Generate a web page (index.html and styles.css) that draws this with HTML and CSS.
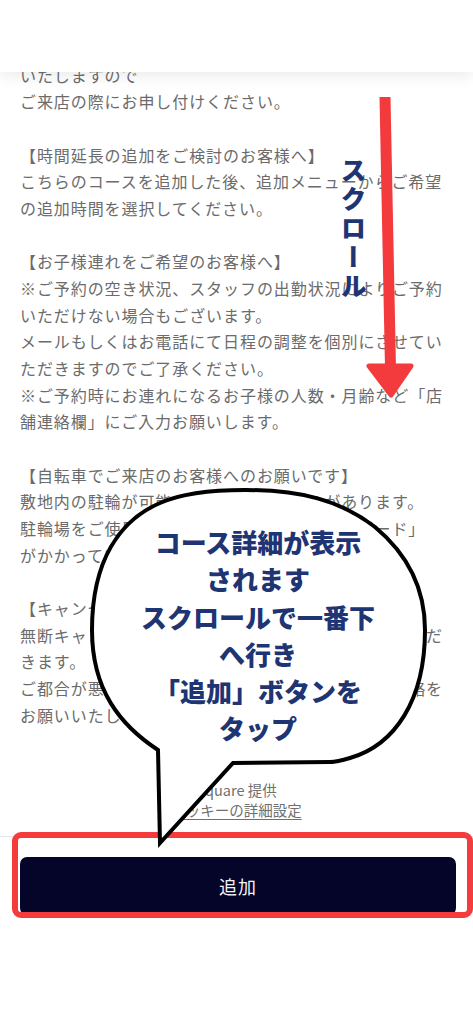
FILE: index.html
```html
<!DOCTYPE html>
<html lang="ja">
<head>
<meta charset="utf-8">
<title>コース詳細</title>
<link rel="stylesheet" href="styles.css">
</head>
<body>
<div class="page">
  <main class="content">
    <p>いたしますので<br>ご来店の際にお申し付けください。</p>
    <p>【時間延長の追加をご検討のお客様へ】<br>こちらのコースを追加した後、追加メニューからご希望<br>の追加時間を選択してください。</p>
    <p>【お子様連れをご希望のお客様へ】<br>※ご予約の空き状況、スタッフの出勤状況によりご予約<br>いただけない場合もございます。<br>メールもしくはお電話にて日程の調整を個別にさせてい<br>ただきますのでご了承ください。<br>※ご予約時にお連れになるお子様の人数・月齢など「店<br>舗連絡欄」にご入力お願いします。</p>
    <p>【自転車でご来店のお客様へのお願いです】<br>敷地内の駐輪が可能ですが、台数に限りがあります。<br>駐輪場をご使用の際は、鍵を掛け「サイクルボード」<br>がかかっているか確認をお願いします。</p>
    <p>【キャンセルについて】<br>無断キャンセルの場合は、次回以降お断りさせていただ<br>きます。<br>ご都合が悪くなった場合は、前日までに電話でご連絡を<br>お願いいたします。</p>
  </main>
  <div class="credit">
    <p class="credit-line">Square 提供</p>
    <a class="credit-link" href="#">クッキーの詳細設定</a>
  </div>
  <div class="actionbar">
    <button class="add-btn" type="button">追加</button>
  </div>

  <header class="topbar"></header>

  <svg class="overlay" viewBox="0 0 473 1024" width="473" height="1024" aria-hidden="true">
    <polygon points="379.5,97 390.5,97 396,368 385,368" fill="#f33a3d"/>
    <polygon points="369,366 411,366 391,395" fill="#f33a3d" stroke="#f33a3d" stroke-width="5" stroke-linejoin="round"/>
  </svg>
  <div class="scroll-label">スクロール</div>

  <div class="highlight"></div>

  <svg class="overlay" viewBox="0 0 473 1024" width="473" height="1024" aria-hidden="true">
    <path d="M158 750 C120 725 92 690 92 630 C92 560 120 520 160 503 C180 494 205 490 245 490 C300 490 340 500 375 527 C405 552 425 585 425 630 C425 700 395 745 350 758 C340 761 335 762 330 762 L233 763 L160 843 Z" fill="#ffffff" stroke="#000000" stroke-width="4" stroke-linejoin="miter"/>
  </svg>
  <div class="bubble-text">コース詳細が表示<br>されます<br>スクロールで一番下<br>へ行き<br>「追加」ボタンを<br>タップ</div>
</div>
</body>
</html>
```

FILE: styles.css
```css
html, body {
  margin: 0;
  padding: 0;
  background: #ffffff;
}

body {
  font-family: "Noto Sans CJK JP", "Noto Sans", sans-serif;
  text-spacing-trim: space-all;
}

.page {
  position: relative;
  width: 473px;
  min-height: 1024px;
  overflow: hidden;
  background: #ffffff;
}

.content {
  padding: 61.7px 20px 0 20px;
  font-size: 16px;
  line-height: 26.67px;
  letter-spacing: 0.92px;
  color: #6b6b6b;
  white-space: nowrap;
}

.content p {
  margin: 0 0 26.67px 0;
}

.content p:last-child {
  margin-bottom: 0;
}

.credit {
  padding-top: 51.7px;
  text-align: center;
  font-size: 14.5px;
  line-height: 20px;
  color: #707070;
}

.credit-line {
  margin: 0;
}

.credit-link {
  color: #707070;
  text-decoration: underline;
  text-underline-offset: 3px;
}

.actionbar {
  margin-top: 16px;
  border-top: 1px solid #e6e6e6;
  padding: 20px 17px 0 20px;
}

.add-btn {
  display: block;
  width: 100%;
  height: 58px;
  border: none;
  border-radius: 7px;
  background: #05052a;
  color: #f2f2f7;
  font-family: "Noto Sans CJK JP", sans-serif;
  font-size: 18px;
  letter-spacing: 1px;
  padding: 0;
}

.topbar {
  position: absolute;
  top: 0;
  left: 0;
  width: 100%;
  height: 72px;
  background: #ffffff;
  box-shadow: 0 3px 16px rgba(0, 0, 0, 0.09);
}

.overlay {
  position: absolute;
  top: 0;
  left: 0;
  pointer-events: none;
}

.scroll-label {
  position: absolute;
  left: 340px;
  top: 157px;
  writing-mode: vertical-rl;
  font-size: 26px;
  line-height: 26px;
  font-weight: 900;
  letter-spacing: 3px;
  color: #1f3473;
}

.highlight {
  position: absolute;
  left: 12px;
  top: 832px;
  width: 461px;
  height: 86px;
  box-sizing: border-box;
  border: 6px solid #f43c3c;
  border-radius: 9px;
}

.bubble-text {
  position: absolute;
  left: 130px;
  top: 523px;
  width: 256px;
  text-align: center;
  font-size: 26px;
  line-height: 37.3px;
  font-weight: 900;
  color: #1f3473;
  white-space: nowrap;
}
```
